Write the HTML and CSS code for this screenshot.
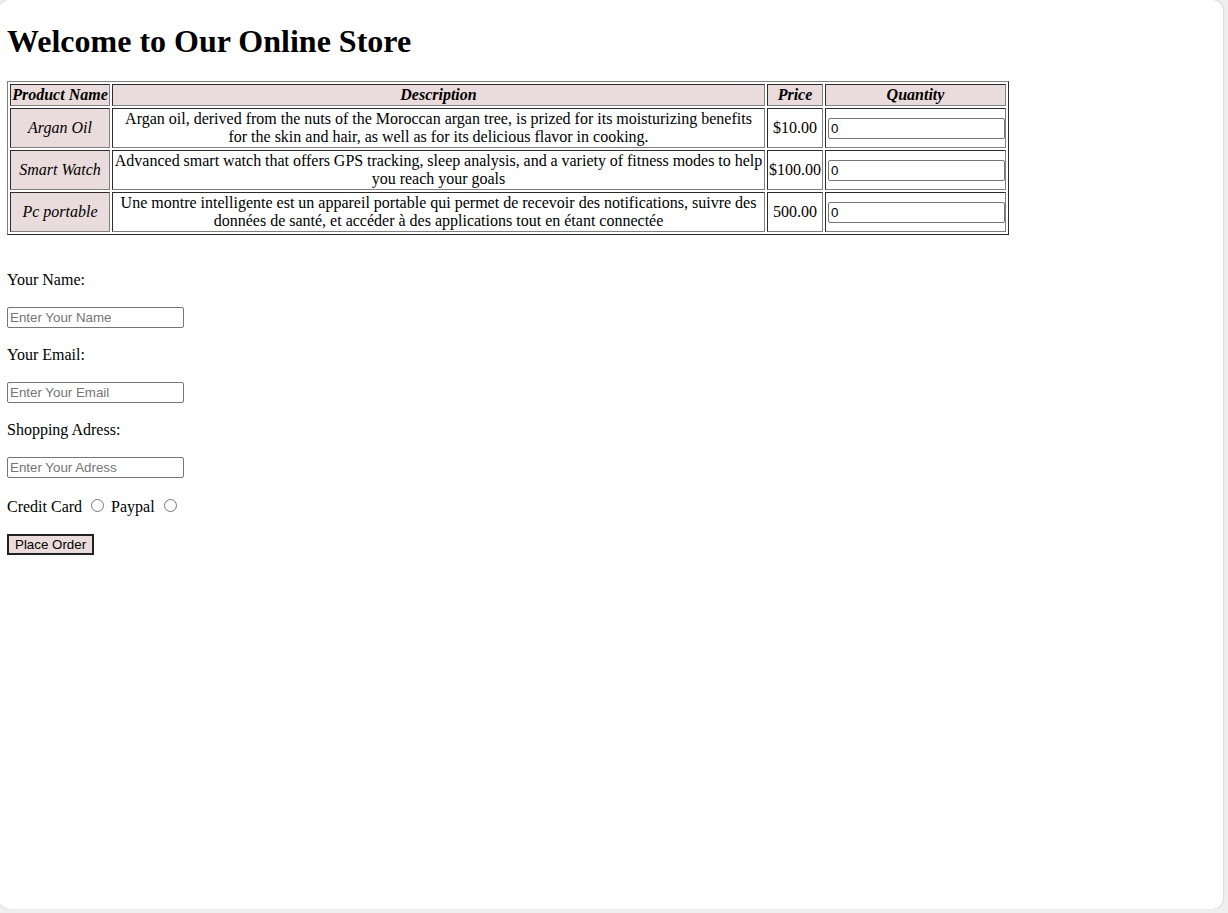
FILE: index.html
```html
<!DOCTYPE html>
<html lang="en">
<head>
<meta charset="utf-8">
<title>Online Store</title>
<link rel="stylesheet" href="styles.css">
</head>
<body>
<div class="frame">
  <h1 class="title">Welcome to Our Online Store</h1>
  <table class="products" border="1">
    <tr>
      <th class="head col-name">Product Name</th>
      <th class="head col-desc">Description</th>
      <th class="head col-price">Price</th>
      <th class="head col-qty">Quantity</th>
    </tr>
    <tr>
      <td class="name">Argan Oil</td>
      <td class="desc">Argan oil, derived from the nuts of the Moroccan argan tree, is prized for its moisturizing benefits for the skin and hair, as well as for its delicious flavor in cooking.</td>
      <td class="price">$10.00</td>
      <td class="qty"><input class="qty-input" type="text" value="0"></td>
    </tr>
    <tr>
      <td class="name">Smart Watch</td>
      <td class="desc desc-tight">Advanced smart watch that offers GPS tracking, sleep analysis, and a variety of fitness modes to help you reach your goals</td>
      <td class="price">$100.00</td>
      <td class="qty"><input class="qty-input" type="text" value="0"></td>
    </tr>
    <tr>
      <td class="name">Pc portable</td>
      <td class="desc">Une montre intelligente est un appareil portable qui permet de recevoir des notifications, suivre des données de santé, et accéder à des applications tout en étant connectée</td>
      <td class="price">500.00</td>
      <td class="qty"><input class="qty-input" type="text" value="0"></td>
    </tr>
  </table>
  <form class="order">
    <p class="label">Your Name:</p>
    <p class="field"><input class="text-input" type="text" placeholder="Enter Your Name"></p>
    <p class="label">Your Email:</p>
    <p class="field"><input class="text-input" type="email" placeholder="Enter Your Email"></p>
    <p class="label">Shopping Adress:</p>
    <p class="field"><input class="text-input" type="text" placeholder="Enter Your Adress"></p>
    <p class="label">Credit Card <input class="radio" type="radio" name="pay"> Paypal <input class="radio" type="radio" name="pay"></p>
    <p class="actions"><button class="submit" type="button">Place Order</button></p>
  </form>
</div>
</body>
</html>
```
FILE: styles.css
```css
html {
  background: #efefef;
}
body {
  margin: 0;
  font-family: "Liberation Serif", "Times New Roman", serif;
  font-size: 16px;
  color: #000;
}
.frame {
  display: flow-root;
  box-sizing: border-box;
  width: 1224px;
  height: 909px;
  margin-left: -1px;
  padding: 0 8px;
  background: #fff;
  border-radius: 10px;
  box-shadow: 0 0 2px rgba(0, 0, 0, 0.25);
}
.title {
  font-size: 32px;
  font-weight: bold;
  margin: 23px 0 21px;
  line-height: 37px;
}
.products {
  width: 1002px;
  table-layout: fixed;
  border-spacing: 2px;
  border: 1px outset #808080;
  margin-top: 1px;
}
.products th,
.products td {
  box-sizing: border-box;
  border: 1px inset #808080;
  padding: 1px;
  line-height: 18px;
}
.col-name { width: 100px; }
.col-desc { width: 653px; }
.col-price { width: 56px; }
.col-qty { width: 181px; }
.head {
  background: #eadcdc;
  font-style: italic;
  font-weight: bold;
  text-align: center;
  white-space: nowrap;
}
.name {
  background: #eadcdc;
  font-style: italic;
  text-align: center;
  white-space: nowrap;
}
.desc {
  text-align: center;
}
.desc-tight {
  word-spacing: -0.12px;
}
.price {
  text-align: center;
  white-space: nowrap;
}
.qty-input,
.text-input {
  font-family: "Liberation Sans", Arial, sans-serif;
  font-size: 13.333px;
  width: 177px;
  box-sizing: border-box;
  height: 21px;
  padding: 1px 2px;
  border: 1px solid #767676;
  border-radius: 2px;
  vertical-align: middle;
}
.qty-input {
  margin-left: 1px;
}
.text-input::placeholder {
  color: #757575;
}
.order {
  margin-top: 36px;
}
.label {
  margin: 18px 0;
}
.field {
  margin: 18px 0;
}
.actions {
  margin: 17px 0;
}
.radio {
  margin: 3px 3px 0 5px;
}
.submit {
  font-family: "Liberation Sans", Arial, sans-serif;
  font-size: 13.333px;
  background: #eadcdc;
  border: 2px solid #222;
  padding: 1px 6px;
  color: #000;
}
```
